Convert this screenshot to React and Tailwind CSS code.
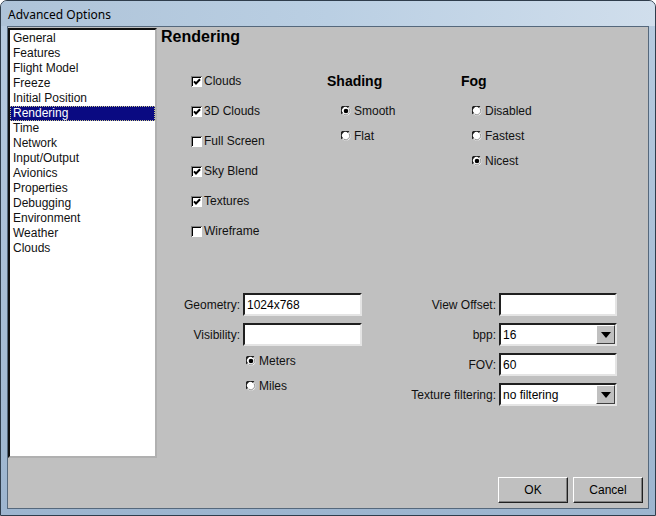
import React from 'react';

const FONT = { fontFamily: '"Liberation Sans", Arial, sans-serif' };

const navItems = [
  'General', 'Features', 'Flight Model', 'Freeze', 'Initial Position', 'Rendering', 'Time',
  'Network', 'Input/Output', 'Avionics', 'Properties', 'Debugging', 'Environment', 'Weather', 'Clouds',
];

const checks = [
  { label: 'Clouds', on: true },
  { label: '3D Clouds', on: true },
  { label: 'Full Screen', on: false },
  { label: 'Sky Blend', on: true },
  { label: 'Textures', on: true },
  { label: 'Wireframe', on: false },
];

function CheckBox({ on }) {
  return (
    <svg width="11" height="11" viewBox="0 0 11 11" className="shrink-0">
      <rect x="0" y="0" width="11" height="11" fill="#808080" />
      <rect x="1" y="1" width="10" height="10" fill="#ffffff" />
      <rect x="1" y="1" width="9" height="9" fill="#000000" />
      <rect x="2" y="2" width="8" height="8" fill="#ffffff" />
      {on && <polyline points="3,5.3 5,7.5 9,3.3" fill="none" stroke="#000" strokeWidth="2" />}
    </svg>
  );
}

function Radio({ on }) {
  return (
    <svg width="10" height="10" viewBox="0 0 10 10" className="shrink-0">
      <circle cx="5" cy="5" r="4.6" fill="#ffffff" />
      <path d="M1.3 7.6 A4 4 0 0 1 7.6 1.3" fill="none" stroke="#202020" strokeWidth="2" />
      <path d="M8 2.4 A4 4 0 0 1 2.4 8" fill="none" stroke="#909090" strokeWidth="1" />
      {on && <circle cx="5" cy="5" r="2.3" fill="#000" />}
    </svg>
  );
}

function RadioRow({ label, on }) {
  return (
    <div className="h-[25px] flex items-center gap-[3px]">
      <Radio on={on} />
      <span className="text-[12px] text-[#111]">{label}</span>
    </div>
  );
}

function TextBox({ value }) {
  return (
    <div className="h-[23px] bg-white border-2 border-t-[#202020] border-l-[#202020] border-b-[#e4e4e4] border-r-[#e4e4e4] flex items-center px-[2px] text-[12px] text-black">
      {value}
    </div>
  );
}

function Combo({ value }) {
  return (
    <div className="h-[23px] bg-white border-2 border-t-[#202020] border-l-[#202020] border-b-[#e4e4e4] border-r-[#e4e4e4] flex items-center text-[12px] text-black">
      <span className="flex-1 px-[2px]">{value}</span>
      <div className="w-[19px] h-full bg-[#c0c0c0] border border-t-white border-l-white border-b-[#404040] border-r-[#404040] flex items-center justify-center">
        <svg width="10" height="6" viewBox="0 0 10 6">
          <polygon points="0,0 10,0 5,6" fill="#000" />
        </svg>
      </div>
    </div>
  );
}

function Button({ children }) {
  return (
    <button className="w-[70px] h-[26px] bg-[#c0c0c0] border border-t-white border-l-white border-b-[#202020] border-r-[#202020] shadow-[inset_-1px_-1px_0_#808080] text-[12px] text-black">
      {children}
    </button>
  );
}

export default function App() {
  return (
    <div style={FONT} className="w-[656px] h-[516px] flex flex-col bg-gradient-to-b from-[#b7cbe0] to-[#9db5cf] border border-[#2f3d4c] rounded-t-[7px] overflow-hidden">
      {/* title bar */}
      <div className="h-[25px] flex items-center pl-[7px] bg-gradient-to-r from-[#aec3d8] via-[#bacfe3] to-[#d0deec]">
        <span className="text-[12px] text-black pt-[2px]" style={{ fontFamily: '"Noto Sans", "Liberation Sans", sans-serif' }}>Advanced Options</span>
      </div>

      <div className="mx-[6px] h-[483px] border border-[#55687c] bg-[#c0c0c0] flex">
        {/* nav list */}
        <div className="mt-[1px] w-[149px] h-[430px] bg-white border-2 border-t-[#101010] border-l-[#101010] border-b-[#b0b0b0] border-r-[#b0b0b0] pt-[1px]">
          {navItems.map((item) => (
            <div
              key={item}
              className={`h-[15px] leading-[15px] text-[12px] pl-[3px] ${
                item === 'Rendering'
                  ? 'bg-[#0a0a82] text-white outline-1 outline-dotted outline-[#c9c98a] -outline-offset-1'
                  : 'text-[#111]'
              }`}
            >
              {item}
            </div>
          ))}
        </div>

        {/* main panel */}
        <div className="flex-1 flex flex-col">
          <div className="h-[20px] leading-[20px] pl-[4px] text-[16px] font-bold text-black">Rendering</div>

          <div className="mt-[19px] flex pl-[34px]">
            <div className="w-[136px] flex flex-col">
              {checks.map((c) => (
                <div key={c.label} className="h-[30px] flex items-center gap-[2px]">
                  <CheckBox on={c.on} />
                  <span className="text-[12px] text-[#111]">{c.label}</span>
                </div>
              ))}
            </div>
            <div className="w-[134px] flex flex-col">
              <div className="h-[30px] flex items-center text-[14px] font-bold text-black">Shading</div>
              <div className="pl-[14px] pt-[2px]">
                <RadioRow label="Smooth" on />
                <RadioRow label="Flat" />
              </div>
            </div>
            <div className="flex flex-col">
              <div className="h-[30px] flex items-center text-[14px] font-bold text-black">Fog</div>
              <div className="pl-[11px] pt-[2px]">
                <RadioRow label="Disabled" />
                <RadioRow label="Fastest" />
                <RadioRow label="Nicest" on />
              </div>
            </div>
          </div>

          <div className="mt-[47px] flex pl-[3px]">
            <div className="flex flex-col">
              <div className="grid grid-cols-[80px_119px] gap-x-[3px] gap-y-[7px] items-center">
                <span className="text-right text-[12px] text-[#111]">Geometry:</span>
                <TextBox value="1024x768" />
                <span className="text-right text-[12px] text-[#111]">Visibility:</span>
                <TextBox value="" />
              </div>
              <div className="mt-[2px] pl-[86px]">
                <RadioRow label="Meters" on />
                <RadioRow label="Miles" />
              </div>
            </div>
            <div className="ml-[4px] grid grid-cols-[130px_118px] gap-x-[3px] gap-y-[7px] items-center content-start">
              <span className="text-right text-[12px] text-[#111]">View Offset:</span>
              <TextBox value="" />
              <span className="text-right text-[12px] text-[#111]">bpp:</span>
              <Combo value="16" />
              <span className="text-right text-[12px] text-[#111]">FOV:</span>
              <TextBox value="60" />
              <span className="text-right text-[12px] text-[#111]">Texture filtering:</span>
              <Combo value="no filtering" />
            </div>
          </div>

          <div className="mt-auto flex justify-end gap-[5px] pr-[5px] pb-[5px]">
            <Button>OK</Button>
            <Button>Cancel</Button>
          </div>
        </div>
      </div>
    </div>
  );
}
